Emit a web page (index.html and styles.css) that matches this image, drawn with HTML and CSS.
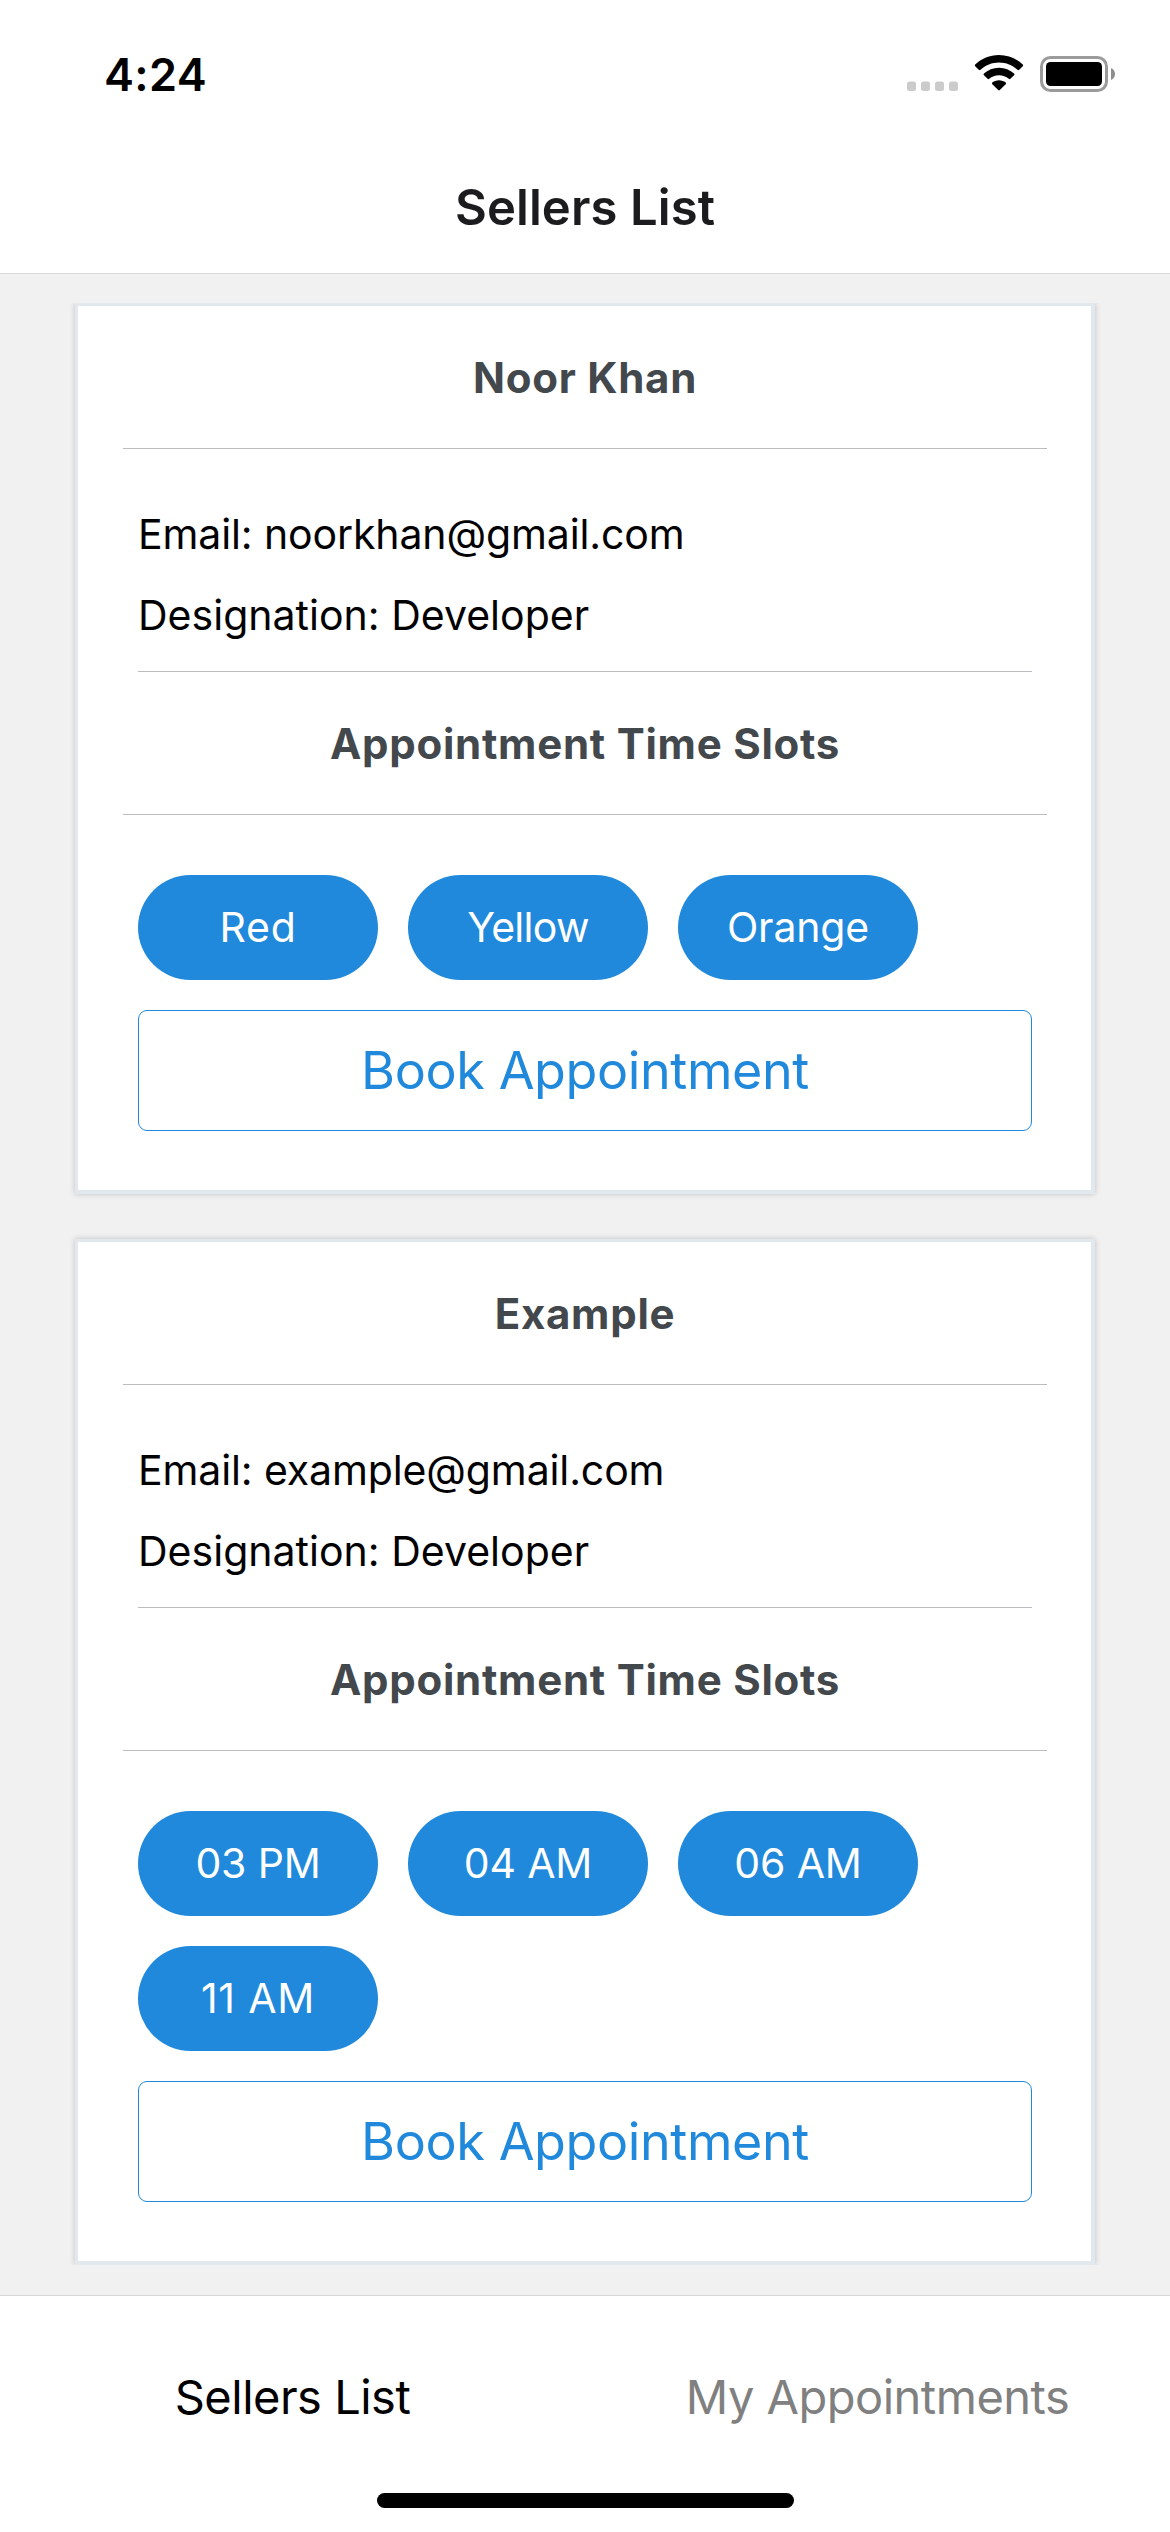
FILE: index.html
```html
<!DOCTYPE html>
<html lang="en">
<head>
  <meta charset="utf-8">
  <title>Sellers List</title>
  <link rel="stylesheet" href="styles.css">
</head>
<body>
  <div class="status-bar">
    <span class="time">4:24</span>
    <svg class="status-icons" width="212" height="40" viewBox="0 0 212 40" aria-hidden="true">
      <g fill="#cbcbcb">
        <rect x="0" y="27.5" width="9" height="9.5" rx="2.5"/>
        <rect x="14" y="27.5" width="9" height="9.5" rx="2.5"/>
        <rect x="28" y="27.5" width="9" height="9.5" rx="2.5"/>
        <rect x="42" y="27.5" width="9" height="9.5" rx="2.5"/>
      </g>
      <path d="M92 1C101.300 1 109.700 4.600 115.800 10.600Q116.500 11.400 115.800 12.200L112.200 15.800Q111.400 16.600 110.500 15.800C105.700 11.300 99.100 8.500 92 8.500S78.300 11.300 73.500 15.800Q72.600 16.600 71.800 15.800L68.200 12.200Q67.500 11.400 68.200 10.600C74.300 4.600 82.700 1 92 1Z"/>
      <path d="M92 13.800C97.800 13.800 103.100 16 107.100 19.600Q107.900 20.400 107.100 21.200L103.400 24.700Q102.600 25.500 101.800 24.800C99.100 22.500 95.700 21.200 92 21.200S84.900 22.500 82.200 24.800Q81.400 25.500 80.600 24.700L76.900 21.200Q76.100 20.400 76.900 19.600C80.900 16 86.200 13.800 92 13.800Z"/>
      <path d="M92 26.300C94.600 26.300 96.900 27.200 98.700 28.600Q99.500 29.400 98.700 30.200L92.800 36.100Q92 36.900 91.200 36.100L85.300 30.200Q84.500 29.400 85.300 28.600C87.100 27.200 89.400 26.300 92 26.300Z"/>
      <rect x="134.500" y="3.500" width="65" height="33" rx="9" fill="none" stroke="#9b9b9b" stroke-width="3"/>
      <rect x="139" y="8" width="56" height="24" rx="4.500"/>
      <path d="M204 14C206.500 15 208 17.300 208 20S206.500 25 204 26Z" fill="#8e8e8e"/>
    </svg>
  </div>

  <header class="nav-header">Sellers List</header>

  <main class="screen">
    <div class="scroller">
      <section class="card">
        <h2 class="card-heading">Noor Khan</h2>
        <div class="details">
          <p>Email: noorkhan@gmail.com</p>
          <p>Designation: Developer</p>
        </div>
        <h2 class="card-heading">Appointment Time Slots</h2>
        <div class="slots">
          <span class="slot loose">Red</span>
          <span class="slot tight">Yellow</span>
          <span class="slot">Orange</span>
        </div>
        <button class="book">Book Appointment</button>
      </section>

      <section class="card">
        <h2 class="card-heading">Example</h2>
        <div class="details">
          <p>Email: example@gmail.com</p>
          <p>Designation: Developer</p>
        </div>
        <h2 class="card-heading">Appointment Time Slots</h2>
        <div class="slots">
          <span class="slot">03 PM</span>
          <span class="slot">04 AM</span>
          <span class="slot">06 AM</span>
          <span class="slot loose">11 AM</span>
        </div>
        <button class="book">Book Appointment</button>
      </section>
    </div>
  </main>

  <nav class="tab-bar">
    <div class="tabs">
      <span class="tab active">Sellers List</span>
      <span class="tab">My Appointments</span>
    </div>
    <div class="home-indicator"></div>
  </nav>
</body>
</html>
```
FILE: styles.css
```css
* {
  box-sizing: border-box;
}

body {
  margin: 0;
  width: 1170px;
  height: 2532px;
  display: flex;
  flex-direction: column;
  overflow: hidden;
  background: #fff;
  color: #000;
  font-family: Inter, "Liberation Sans", sans-serif;
}

.status-bar {
  flex: none;
  height: 141px;
  padding: 0 51px 0 104px;
  display: flex;
  justify-content: space-between;
  align-items: flex-start;
}

.time {
  margin-top: 44px;
  font-size: 45px;
  font-weight: 600;
  line-height: 61px;
  letter-spacing: 0.4px;
}

.status-icons {
  margin-top: 54px;
}

.nav-header {
  flex: none;
  height: 133px;
  border-bottom: 1px solid #d8d8d8;
  color: #1c1c1e;
  font-size: 49px;
  font-weight: 600;
  line-height: 133px;
  letter-spacing: 0.1px;
  text-align: center;
}

.screen {
  flex: none;
  height: 2021px;
  padding: 29px 0 30px;
  background: #f1f1f1;
}

.scroller {
  height: 1962px;
  padding: 0 75px;
  display: flex;
  flex-direction: column;
  gap: 45px;
  overflow: hidden;
}

.card {
  flex: none;
  padding: 0 44px 59px 45px;
  border: solid #e1e8ee;
  border-width: 3px 4px 4px 3px;
  background: #fff;
  box-shadow: 0 0 6px rgba(0, 0, 0, 0.2);
}

.card-heading {
  height: 143px;
  margin: 0;
  border-bottom: 1px solid #bcbbc1;
  color: #43484d;
  font-size: 42px;
  font-weight: 700;
  line-height: 143px;
  letter-spacing: 0.75px;
  text-align: center;
}

.details {
  margin: 0 15px;
  padding: 60px 0 30px;
  display: flex;
  flex-direction: column;
  gap: 30px;
  border-bottom: 1px solid #bcbbc1;
}

.details p {
  margin: 0;
  font-size: 41px;
  line-height: 51px;
  letter-spacing: -0.12px;
}

.details p:last-child {
  letter-spacing: 0.02px;
}

.slots {
  margin: 60px 15px 30px;
  display: flex;
  flex-wrap: wrap;
  gap: 30px;
}

.slot {
  width: 240px;
  height: 105px;
  border-radius: 52.5px;
  background: #2089dc;
  color: #fff;
  font-size: 41px;
  line-height: 105px;
  letter-spacing: -0.15px;
  text-align: center;
}

.slot.loose {
  letter-spacing: 0.8px;
}

.slot.tight {
  letter-spacing: -0.7px;
}

.book {
  display: block;
  width: 894px;
  height: 121px;
  margin: 0 15px;
  padding: 0;
  border: 1px solid #2089dc;
  border-radius: 9px;
  background: #fff;
  color: #2089dc;
  font-family: inherit;
  font-size: 52px;
  line-height: 119px;
  letter-spacing: -0.4px;
  text-align: center;
}

.tab-bar {
  flex: none;
  height: 237px;
  border-top: 1px solid #d8d8d8;
}

.tabs {
  height: 197px;
  display: flex;
}

.tab {
  flex: 1;
  color: #808080;
  font-size: 47px;
  line-height: 202px;
  letter-spacing: -0.5px;
  text-align: center;
}

.tab.active {
  color: #000;
}

.home-indicator {
  width: 417px;
  height: 15px;
  margin: 0 auto;
  border-radius: 7.5px;
  background: #000;
}
```
